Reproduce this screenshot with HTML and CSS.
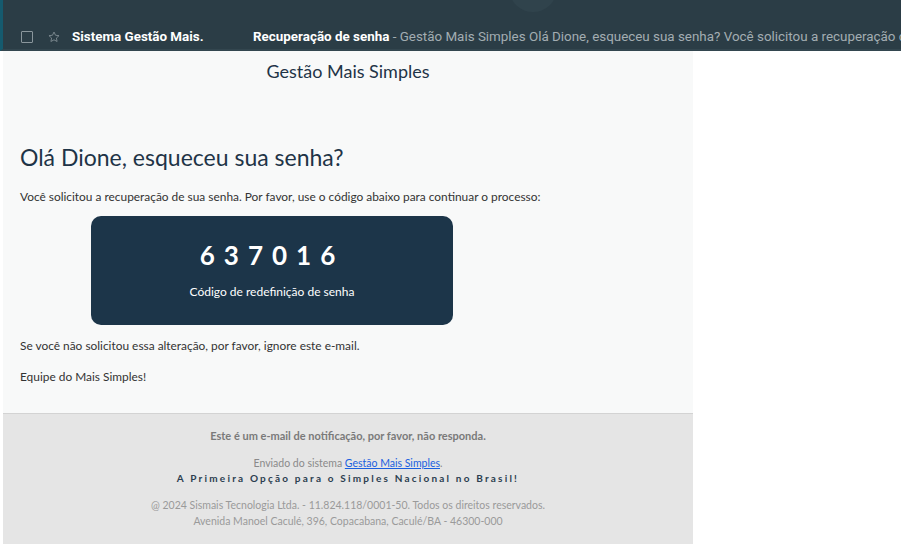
FILE: index.html
```html
<!DOCTYPE html>
<html lang="pt-BR">
<head>
<meta charset="utf-8">
<title>Recuperação de senha</title>
<link rel="stylesheet" href="styles.css">
</head>
<body>
<div class="topbar">
  <div class="blob"></div>
  <span class="check"></span>
  <svg class="star" viewBox="0 0 24 24" width="14" height="14"><path d="M12 3.5l2.6 5.5 6 .7-4.5 4.1 1.2 5.9L12 16.8l-5.3 2.9 1.2-5.9L3.4 9.7l6-.7z" fill="none" stroke="#7d8a90" stroke-width="1.6" stroke-linejoin="round"/></svg>
  <span class="sender">Sistema Gestão Mais.</span>
  <span class="subject"><b>Recuperação de senha</b><span class="snippet"> - Gestão Mais Simples Olá Dione, esqueceu sua senha? Você solicitou a recuperação de sua senha.</span></span>
</div>
<div class="page">
  <div class="mail">
    <div class="brand">Gestão Mais Simples</div>
    <div class="content">
      <h1 class="title">Olá Dione, esqueceu sua senha?</h1>
      <p class="text">Você solicitou a recuperação de sua senha. Por favor, use o código abaixo para continuar o processo:</p>
      <div class="codebox">
        <div class="code">637016</div>
        <div class="codelabel">Código de redefinição de senha</div>
      </div>
      <p class="text t2">Se você não solicitou essa alteração, por favor, ignore este e-mail.</p>
      <p class="text t3">Equipe do Mais Simples!</p>
    </div>
    <div class="footer">
      <p class="notice">Este é um e-mail de notificação, por favor, não responda.</p>
      <p class="sent">Enviado do sistema <a href="#">Gestão Mais Simples</a>.</p>
      <p class="slogan">A Primeira Opção para o Simples Nacional no Brasil!</p>
      <p class="legal">@ 2024 Sismais Tecnologia Ltda. - 11.824.118/0001-50. Todos os direitos reservados.<br>Avenida Manoel Caculé, 396, Copacabana, Caculé/BA - 46300-000</p>
    </div>
  </div>
</div>
</body>
</html>
```
FILE: styles.css
```css
html, body {
  margin: 0;
  padding: 0;
  background: #ffffff;
  overflow: hidden;
}
body {
  width: 901px;
  height: 544px;
}
.topbar {
  position: relative;
  background: #2b3d46;
  border-left: 3px solid #155a6e;
  border-bottom: 2px solid #33464f;
  display: flex;
  align-items: center;
  padding-top: 24px;
  box-sizing: border-box;
  height: 51px;
  font-family: Roboto, "Liberation Sans", sans-serif;
  font-size: 13.4px;
  white-space: nowrap;
  overflow: hidden;
}
.blob {
  position: absolute;
  left: 507px;
  top: -30px;
  width: 46px;
  height: 42px;
  border-radius: 50%;
  background: #30434c;
}
.check {
  width: 10px;
  height: 10px;
  border: 1.5px solid #8a969c;
  border-radius: 1px;
  margin-left: 18px;
  flex: none;
}
.star {
  margin-left: 14px;
  flex: none;
}
.sender {
  margin-left: 11px;
  width: 181px;
  flex: none;
  color: #ffffff;
  font-weight: 700;
}
.subject {
  color: #ffffff;
}
.subject b {
  font-weight: 700;
}
.snippet {
  color: #a3adb2;
}
.page {
  padding-left: 3px;
}
.mail {
  width: 690px;
  background: #f8f9f9;
  font-family: Lato, "Open Sans", sans-serif;
}
.brand {
  text-align: center;
  font-size: 18px;
  color: #1f3447;
  padding-top: 9px;
  height: 38px;
  line-height: 22px;
}
.content {
  padding: 0 17px;
  height: 315px;
  box-sizing: border-box;
}
.title {
  margin: 0;
  padding-top: 44px;
  font-size: 23px;
  font-weight: 400;
  color: #1f3447;
  line-height: 30px;
}
.text {
  margin: 0;
  font-size: 11.9px;
  color: #333;
  line-height: 14px;
}
.content > .text:first-of-type {
  margin-top: 18px;
}
.codebox {
  margin: 12px 0 0 71px;
  width: 362px;
  height: 109px;
  background: #1c3549;
  border-radius: 10px;
  color: #ffffff;
  text-align: center;
  box-sizing: border-box;
  padding-top: 23px;
}
.code {
  font-size: 26px;
  font-weight: 700;
  letter-spacing: 9px;
  line-height: 32px;
}
.codelabel {
  font-size: 12px;
  margin-top: 13px;
}
.t2 {
  margin-top: 14px;
}
.t3 {
  margin-top: 17px;
}
.footer {
  background: #e5e5e5;
  border-top: 1px solid #d3d3d3;
  height: 131px;
  box-sizing: border-box;
  text-align: center;
  padding-top: 15px;
  font-size: 10.5px;
  color: #888;
}
.footer p {
  margin: 0;
}
.notice {
  font-size: 11px;
  font-weight: 700;
  color: #7a7a7a;
  line-height: 14px;
}
.sent {
  margin-top: 13px !important;
  line-height: 14px;
  color: #8a8a8a;
}
.sent a {
  color: #1a5fe0;
}
.slogan {
  font-size: 10px;
  font-weight: 700;
  letter-spacing: 2.2px;
  color: #2c3e50;
  line-height: 16px;
}
.legal {
  margin-top: 11px !important;
  color: #9a9a9a;
  line-height: 16px;
}
```
